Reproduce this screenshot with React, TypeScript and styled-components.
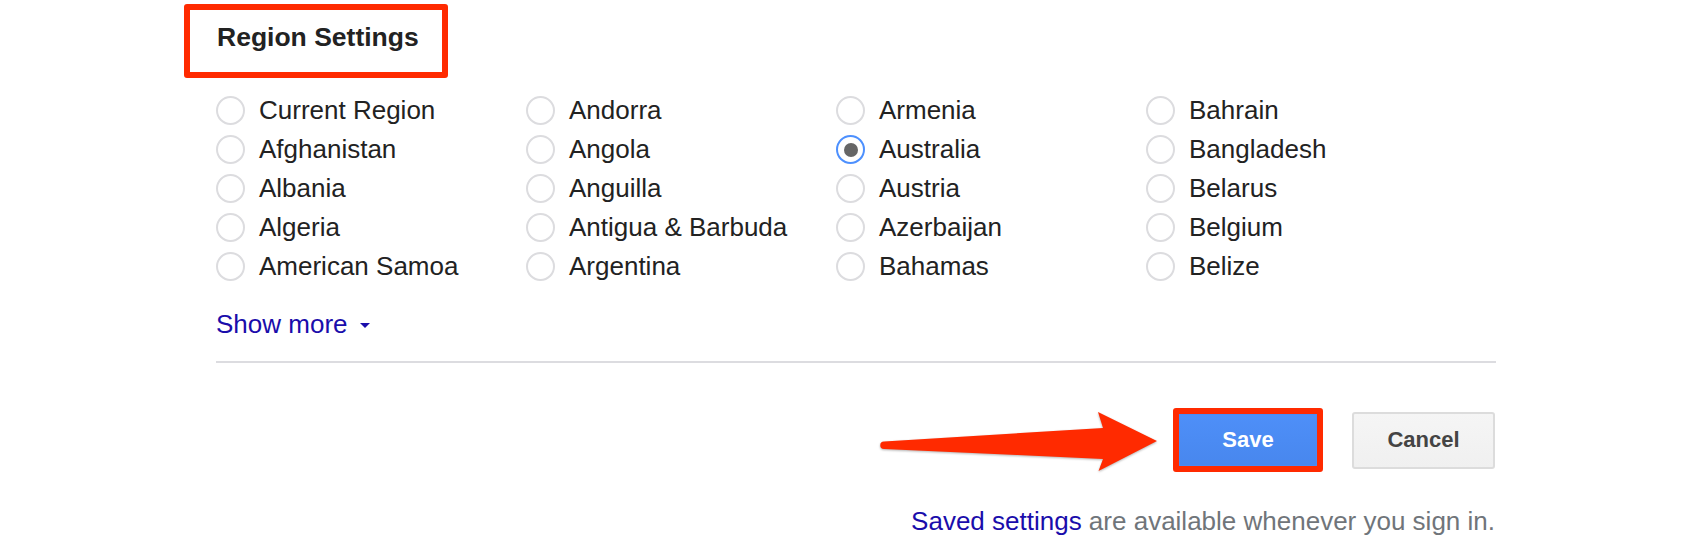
import React from "react";
import styled, { createGlobalStyle } from "styled-components";

const GlobalStyle = createGlobalStyle`
  html, body {
    margin: 0;
    padding: 0;
    background: #ffffff;
  }
  body {
    font-family: "Liberation Sans", Arial, Helvetica, sans-serif;
    color: #222222;
  }
`;

const PageContainer = styled.div`
  width: 1280px;
  margin-left: 216px;
  padding-top: 4px;
  display: flex;
  flex-direction: column;
  align-items: stretch;
`;

// red annotation box round the heading
const TitleBox = styled.div`
  width: 264px;
  height: 74px;
  margin-left: -32px;
  box-sizing: border-box;
  border: 6px solid #ff2a00;
  border-radius: 3px;
  padding: 0 0 7px 27px;
  display: flex;
  align-items: center;
`;

const Title = styled.h2`
  margin: 0;
  font-size: 26.5px;
  font-weight: 700;
  color: #222222;
  white-space: nowrap;
`;

const RadioGrid = styled.div`
  margin-top: 13px;
  display: grid;
  grid-template-columns: repeat(4, 310px);
  grid-template-rows: repeat(5, 39px);
  grid-auto-flow: column;
`;

const RadioRow = styled.label`
  display: flex;
  align-items: center;
  gap: 14px;
  font-size: 26px;
  color: #222222;
  white-space: nowrap;
  cursor: pointer;
`;

const RadioCircle = styled.span<{ checked: boolean }>`
  width: 29px;
  height: 29px;
  box-sizing: border-box;
  border-radius: 50%;
  border: 2px solid ${(p) => (p.checked ? "#4d90fe" : "#dcdcdf")};
  background: #ffffff;
  display: flex;
  align-items: center;
  justify-content: center;
  flex-shrink: 0;

  &::after {
    content: "";
    width: 14px;
    height: 14px;
    border-radius: 50%;
    background: #666666;
    display: ${(p) => (p.checked ? "block" : "none")};
  }
`;

const ShowMore = styled.a`
  margin-top: 23px;
  align-self: flex-start;
  display: flex;
  align-items: center;
  gap: 12px;
  font-size: 26px;
  line-height: 30px;
  color: #1a0dab;
  text-decoration: none;
  cursor: pointer;
`;

const Caret = styled.span`
  width: 0;
  height: 0;
  border-left: 5px solid transparent;
  border-right: 5px solid transparent;
  border-top: 5px solid #1a0dab;
  margin-top: 2px;
`;

const Divider = styled.div`
  margin-top: 22px;
  height: 2px;
  background: #dcdce0;
`;

const ButtonRow = styled.div`
  margin-top: 44px;
  height: 66px;
  display: flex;
  align-items: center;
  justify-content: flex-end;
  padding-right: 1px;
`;

const Arrow = styled.svg`
  width: 290px;
  height: 66px;
  margin-right: 7px;
  filter: drop-shadow(0 1px 1px rgba(0, 0, 0, 0.3));
`;

const Highlight = styled.div`
  width: 150px;
  height: 64px;
  box-sizing: border-box;
  border: 6px solid #ff2a00;
  border-radius: 3px;
  margin-right: 29px;
  display: flex;
`;

const Button = styled.button<{ primary?: boolean }>`
  box-sizing: border-box;
  width: ${(p) => (p.primary ? "138px" : "143px")};
  height: ${(p) => (p.primary ? "52px" : "57px")};
  font-family: "Liberation Sans", Arial, sans-serif;
  font-size: 22px;
  font-weight: 700;
  border-radius: ${(p) => (p.primary ? "0" : "3px")};
  border: ${(p) => (p.primary ? "1px solid #4a8bf3" : "2px solid #dcdcdc")};
  color: ${(p) => (p.primary ? "#ffffff" : "#444444")};
  background: ${(p) =>
    p.primary
      ? "linear-gradient(#4e8ff8, #4887ee)"
      : "linear-gradient(#f5f5f5, #f0f0f0)"};
  cursor: pointer;
  padding: 0;
`;

const Footer = styled.div`
  margin-top: 33px;
  text-align: right;
  font-size: 26px;
  line-height: 30px;
  color: #70757a;
  padding-right: 1px;

  a {
    color: #1a0dab;
    text-decoration: none;
  }
`;

const regions = [
  "Current Region",
  "Afghanistan",
  "Albania",
  "Algeria",
  "American Samoa",
  "Andorra",
  "Angola",
  "Anguilla",
  "Antigua & Barbuda",
  "Argentina",
  "Armenia",
  "Australia",
  "Austria",
  "Azerbaijan",
  "Bahamas",
  "Bahrain",
  "Bangladesh",
  "Belarus",
  "Belgium",
  "Belize",
];

export default function App(): React.JSX.Element {
  const selected = "Australia";

  return (
    <>
      <GlobalStyle />
      <PageContainer>
        <TitleBox>
          <Title>Region Settings</Title>
        </TitleBox>

        <RadioGrid>
          {regions.map((name) => (
            <RadioRow key={name}>
              <RadioCircle checked={name === selected} />
              {name}
            </RadioRow>
          ))}
        </RadioGrid>

        <ShowMore>
          Show more
          <Caret />
        </ShowMore>

        <Divider />

        <ButtonRow>
          <Arrow viewBox="0 0 290 66">
            <path
              d="M8 34.5 L227 21 L222 5 L281 34 L222.5 64 L227 52 L8 42 A3.75 3.75 0 0 1 8 34.5 Z"
              fill="#ff2a00"
            />
          </Arrow>
          <Highlight>
            <Button primary>Save</Button>
          </Highlight>
          <Button>Cancel</Button>
        </ButtonRow>

        <Footer>
          <a>Saved settings</a> are available whenever you sign in.
        </Footer>
      </PageContainer>
    </>
  );
}
